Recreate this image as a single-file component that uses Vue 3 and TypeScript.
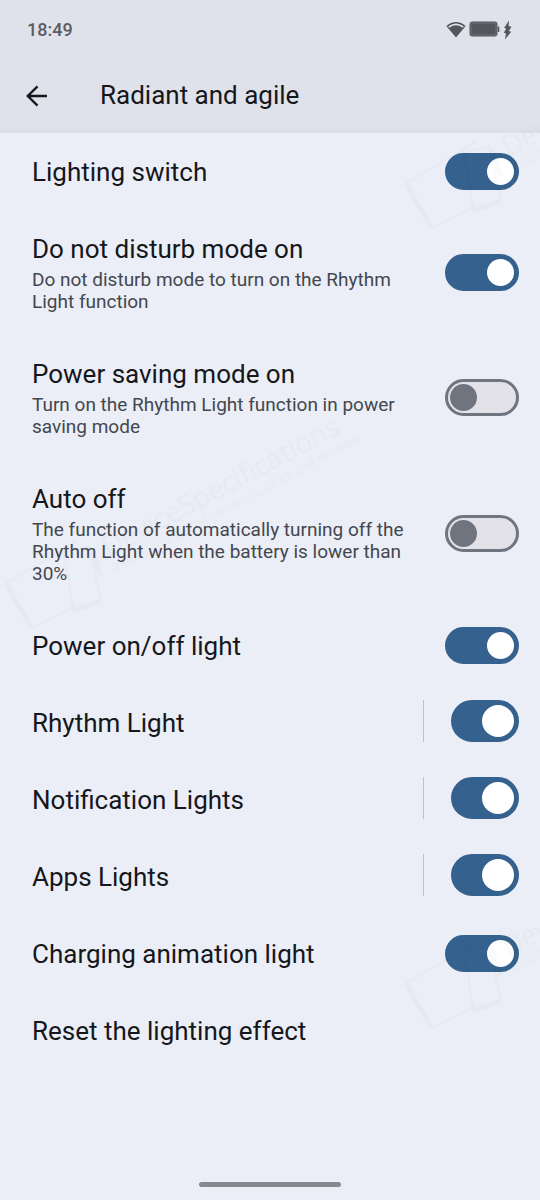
<script setup lang="ts">
import { ref } from 'vue'

interface Setting {
  id: string
  title: string
  summary?: string
  kind: 'switch' | 'split' | 'action'
  on: boolean
}

const settings = ref<Setting[]>([
  { id: 'lighting', title: 'Lighting switch', kind: 'switch', on: true },
  {
    id: 'dnd',
    title: 'Do not disturb mode on',
    summary: 'Do not disturb mode to turn on the Rhythm Light function',
    kind: 'switch',
    on: true,
  },
  {
    id: 'saving',
    title: 'Power saving mode on',
    summary: 'Turn on the Rhythm Light function in power saving mode',
    kind: 'switch',
    on: false,
  },
  {
    id: 'auto',
    title: 'Auto off',
    summary: 'The function of automatically turning off the Rhythm Light when the battery is lower than 30%',
    kind: 'switch',
    on: false,
  },
  { id: 'power', title: 'Power on/off light', kind: 'switch', on: true },
  { id: 'rhythm', title: 'Rhythm Light', kind: 'split', on: true },
  { id: 'notification', title: 'Notification Lights', kind: 'split', on: true },
  { id: 'apps', title: 'Apps Lights', kind: 'split', on: true },
  { id: 'charging', title: 'Charging animation light', kind: 'switch', on: true },
  { id: 'reset', title: 'Reset the lighting effect', kind: 'action', on: false },
])

const marks = ['translate(5 583)', 'translate(405 183)', 'translate(405 983)']
</script>

<template>
  <div class="screen">
    <header class="top">
      <div class="status">
        <time>18:49</time>
        <div class="status-icons">
          <svg width="20" height="17" viewBox="0 0 20 17" aria-label="Wi-Fi">
            <path d="M10 16.500 0.500 5.200C6-0.300 14-0.300 19.500 5.200Z" fill="#55565c" />
            <path d="M2.800 6Q10 0.800 17.200 6" fill="none" stroke="#dfe2eb" stroke-width="1.700" />
          </svg>
          <svg width="31" height="17" viewBox="0 0 31 17" aria-label="Battery">
            <rect x="0.500" y="0.500" width="28" height="15" rx="3" fill="#55565c" />
            <rect x="2" y="2" width="25" height="12" rx="1" fill="none" stroke="#7b7d83" stroke-width="0.700" />
            <path d="M29.500 5.500v5.500" stroke="#55565c" stroke-width="1.600" />
          </svg>
          <svg width="9" height="20" viewBox="0 0 9 20" aria-label="Charging">
            <path d="M6 0.500 1 8 3.200 8.600 0.800 12.800 3 13.400 2 19.500 8.200 11.800 5.800 11 8.500 6.800 5.600 6Z" fill="#55565c" />
          </svg>
        </div>
      </div>
      <div class="bar">
        <button class="back" type="button" aria-label="Back">
          <svg width="22" height="22" viewBox="0 0 22 22" fill="none" stroke="#15171b" stroke-width="2.400">
            <path d="M21 11H2.200M11.500 1.300 1.800 11l9.700 9.700" />
          </svg>
        </button>
        <h1>Radiant and agile</h1>
      </div>
    </header>

    <main>
      <div v-for="item in settings" :key="item.id" class="row">
        <button v-if="item.kind !== 'switch'" :id="item.id + '-label'" type="button" class="text title">
          {{ item.title }}
        </button>
        <label v-else :for="item.id" class="text">
          <span class="title">{{ item.title }}</span>
          <span v-if="item.summary" class="summary">{{ item.summary }}</span>
        </label>
        <span v-if="item.kind === 'split'" class="divider"></span>
        <input
          v-if="item.kind !== 'action'"
          :id="item.id"
          v-model="item.on"
          type="checkbox"
          role="switch"
          class="toggle"
          :class="{ large: item.kind === 'split' }"
          :aria-labelledby="item.kind === 'split' ? item.id + '-label' : undefined"
        />
      </div>
    </main>

    <footer><span class="handle"></span></footer>

    <svg class="watermark" width="540" height="1200" aria-hidden="true">
      <g v-for="mark in marks" :key="mark" :transform="mark">
        <path d="M1 0 28 45 68 24 62-14M1 0 60-34 70-42 M62-14 58-30 84-36 96 18" />
        <path class="thick" d="M1 1 27 46M68 27 96 18M86-34 96-8" />
        <g transform="rotate(-28)">
          <text x="103" y="26" class="mark-name">DeviceSpecifications</text>
          <text x="99" y="42" class="mark-line">specifications, comparisons, news and reviews</text>
        </g>
      </g>
    </svg>
  </div>
</template>

<style>
body {
  margin: 0;
  background: #ebeef6;
}
</style>

<style scoped>
.screen {
  position: relative;
  display: flex;
  flex-direction: column;
  min-height: 100vh;
  overflow: hidden;
  background: #ebeef6;
  color: #15171b;
  font-family: Roboto, sans-serif;
}
.top {
  background: linear-gradient(#dfe2eb 92%, #dcdfe8);
}
.status {
  display: flex;
  align-items: center;
  justify-content: space-between;
  height: 59px;
  padding: 0 28px 0 27px;
  color: #5b5c62;
  font-size: 18px;
  font-weight: 500;
}
.status-icons {
  display: flex;
  align-items: center;
  gap: 3px;
}
.bar {
  display: flex;
  align-items: center;
  height: 73px;
  padding: 0 26px 1px;
  gap: 52px;
}
.back {
  display: flex;
  padding: 0;
  border: 0;
  background: none;
}
h1 {
  margin: 0;
  font-size: 26px;
  font-weight: 400;
  line-height: 31px;
}
main {
  flex: 1;
}
.row {
  display: flex;
  align-items: center;
  padding: 24px 21px 22px 32px;
}
.text {
  flex: 1;
  display: flex;
  flex-direction: column;
  gap: 4px;
  padding: 0;
  border: 0;
  background: none;
  color: inherit;
  font-family: inherit;
  text-align: left;
}
.title {
  font-size: 26px;
  line-height: 31px;
}
.summary {
  color: #43474e;
  font-size: 19px;
  line-height: 22px;
}
.divider {
  width: 1px;
  height: 42px;
  margin: -9px 27px -3px 0;
  background: #c0c1c7;
}
.toggle {
  appearance: none;
  box-sizing: border-box;
  flex: none;
  display: flex;
  align-items: center;
  width: 74px;
  height: 37px;
  margin: -5px 0 -3px 20px;
  padding: 0 2px;
  border: 3px solid #70747e;
  border-radius: 21px;
  background: #e2e2e8;
}
.toggle::before {
  content: '';
  width: 27px;
  height: 27px;
  border-radius: 50%;
  background: #70747e;
}
.toggle:checked {
  justify-content: flex-end;
  border-color: #35618e;
  background: #35618e;
}
.toggle:checked::before {
  background: #fff;
}
.toggle.large {
  width: 68px;
  height: 42px;
  margin: -9px 0 -3px;
}
.toggle.large::before {
  width: 32px;
  height: 32px;
}
footer {
  display: flex;
  justify-content: center;
  padding: 14px 0 13px;
}
.handle {
  width: 142px;
  height: 5px;
  border-radius: 3px;
  background: #88898f;
}
.watermark {
  position: absolute;
  top: 0;
  left: 0;
  pointer-events: none;
  opacity: 0.014;
}
.watermark path {
  fill: none;
  stroke: #000;
  stroke-width: 2;
}
.watermark .thick {
  stroke-width: 5;
}
.mark-name {
  font: 28px 'Open Sans', sans-serif;
}
.mark-line {
  font: 13px 'Open Sans', sans-serif;
}
</style>
